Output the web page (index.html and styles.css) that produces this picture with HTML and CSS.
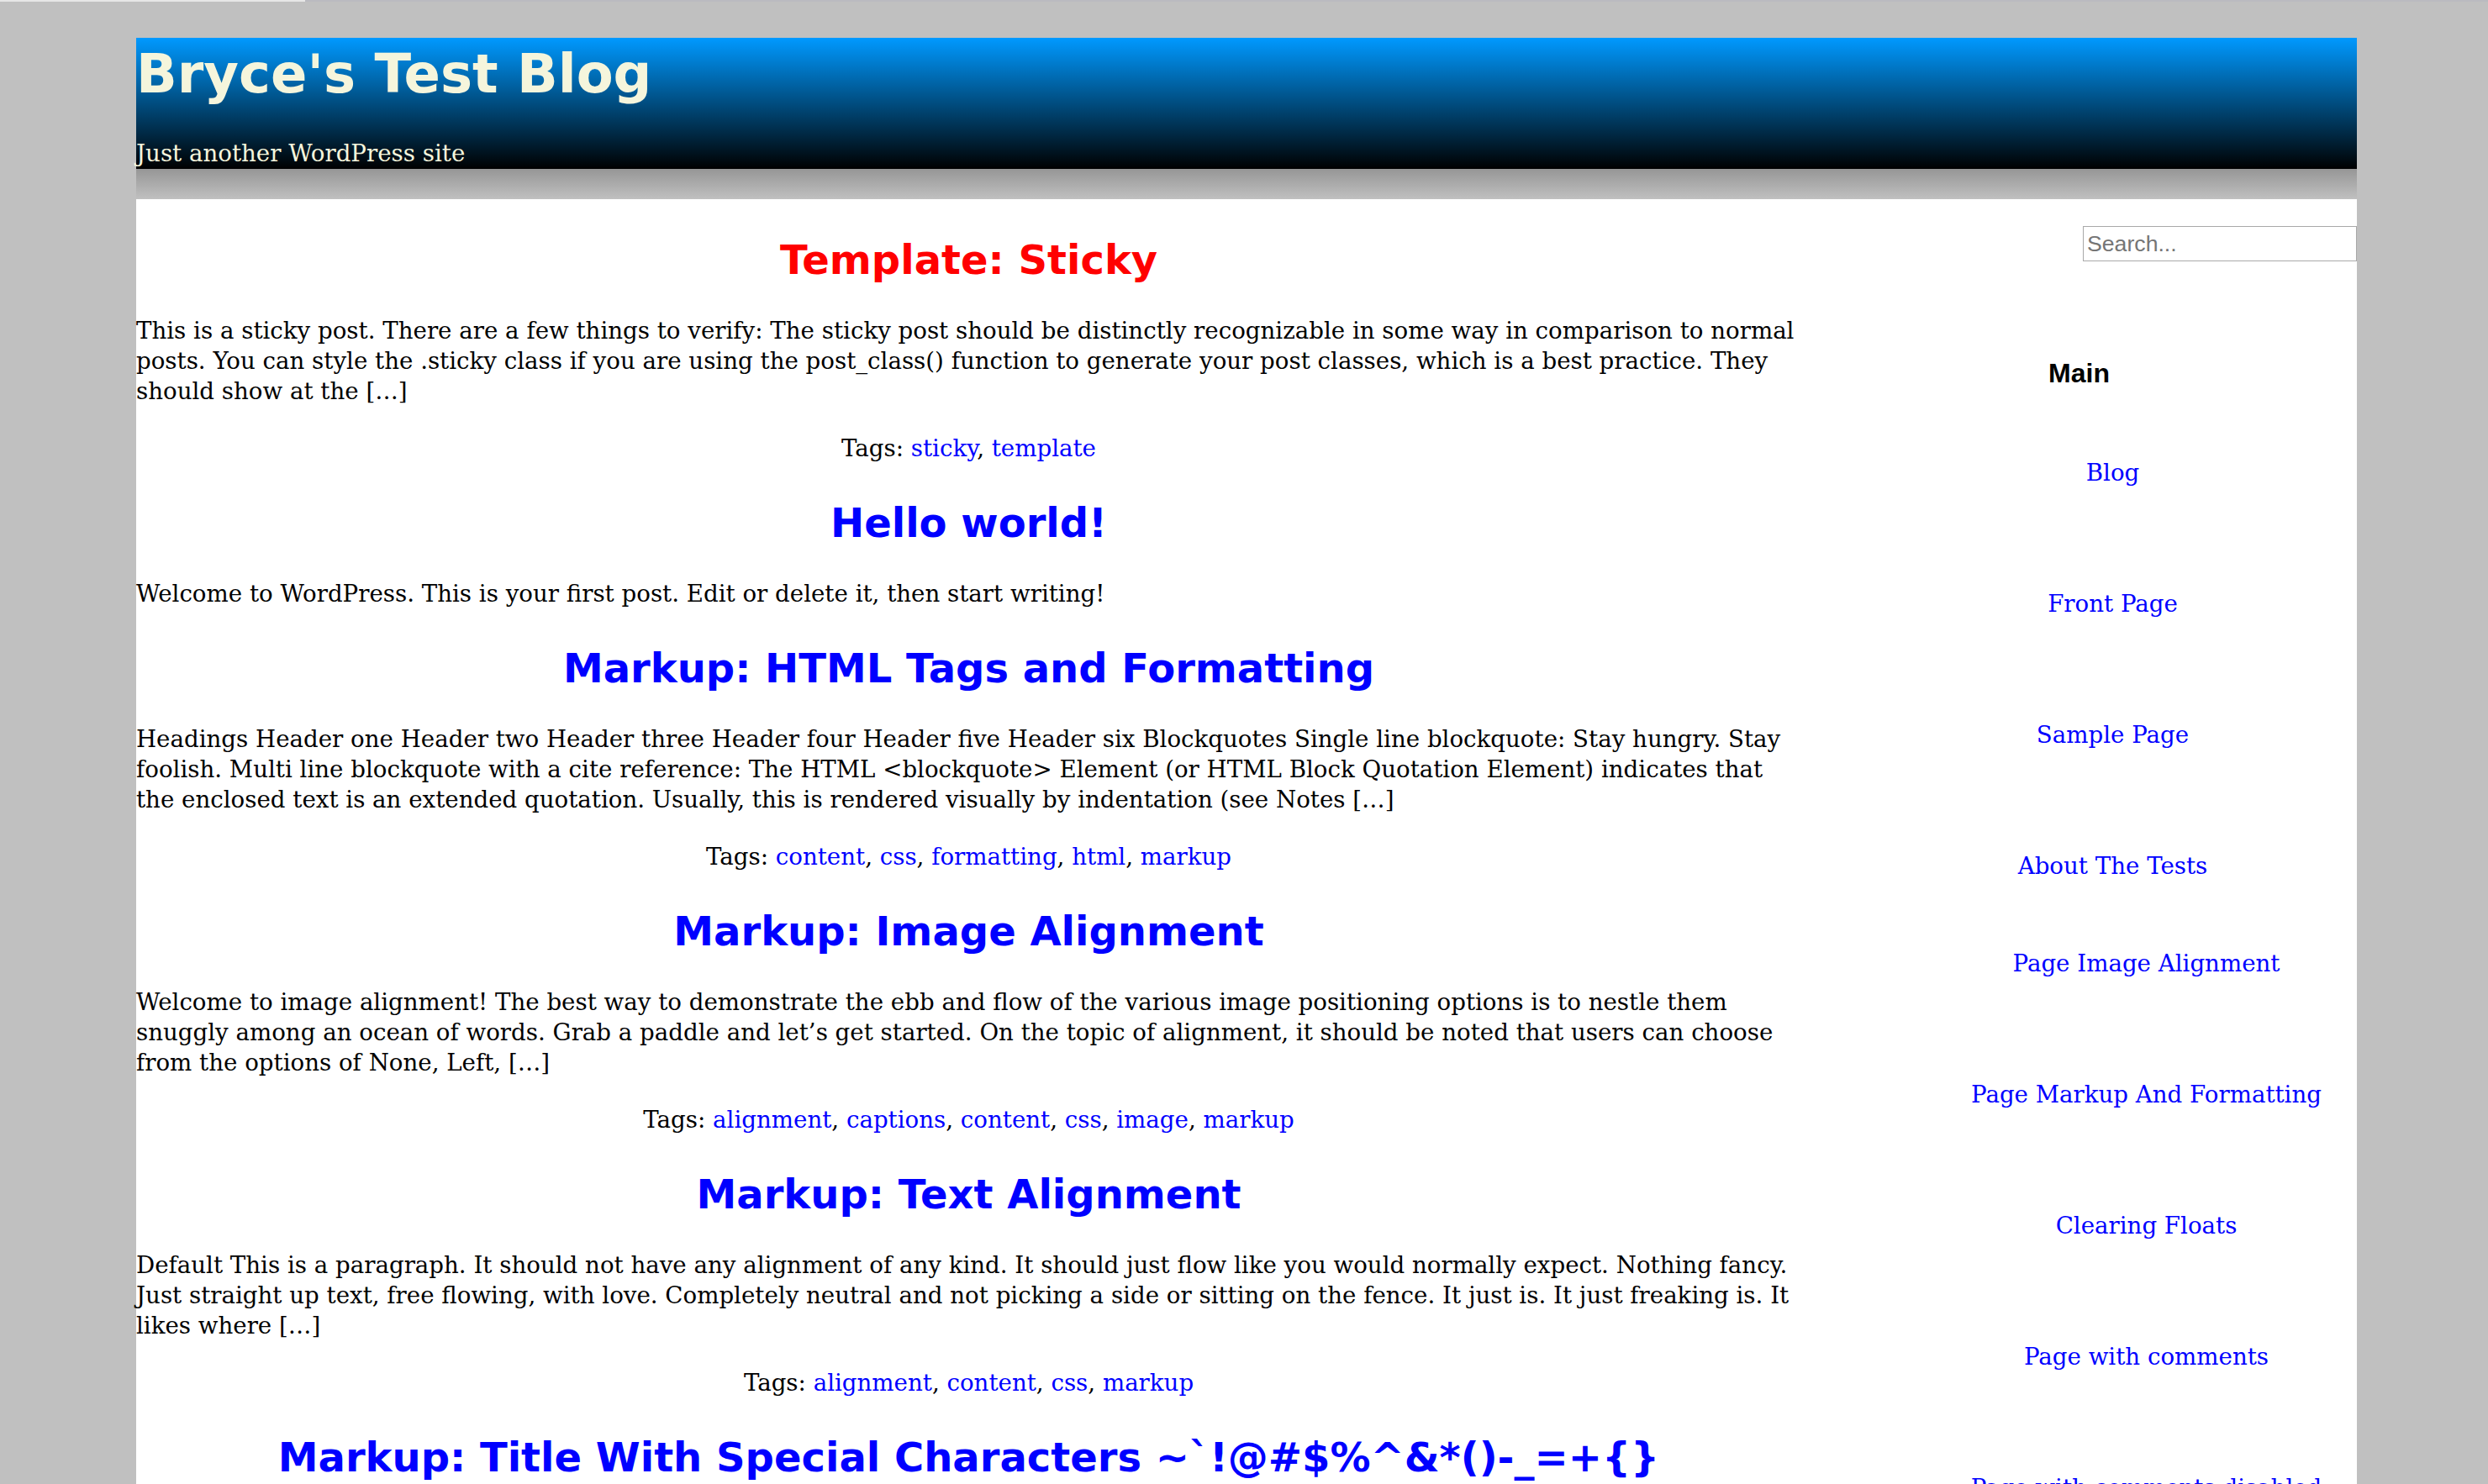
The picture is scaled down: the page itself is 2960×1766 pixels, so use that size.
FILE: index.html
```html
<!DOCTYPE html>
<html lang="en">
<head>
<meta charset="utf-8">
<title>Bryce's Test Blog</title>
<link rel="stylesheet" href="styles.css">
</head>
<body>
<div class="topbar"></div>
<div class="page">
  <header class="masthead">
    <h1 class="site-title">Bryce's Test Blog</h1>
    <p class="tagline">Just another WordPress site</p>
  </header>
  <div class="masthead-shadow"></div>
  <div class="content">
    <main class="posts">
      <article class="post sticky">
        <h2 class="post-title"><a href="#">Template: Sticky</a></h2>
        <p class="excerpt">This is a sticky post. There are a few things to verify: The sticky post should be distinctly recognizable in some way in comparison to normal posts. You can style the .sticky class if you are using the post_class() function to generate your post classes, which is a best practice. They should show at the […]</p>
        <p class="tags">Tags: <a href="#">sticky</a>, <a href="#">template</a></p>
      </article>
      <article class="post">
        <h2 class="post-title"><a href="#">Hello world!</a></h2>
        <p class="excerpt">Welcome to WordPress. This is your first post. Edit or delete it, then start writing!</p>
      </article>
      <article class="post">
        <h2 class="post-title"><a href="#">Markup: HTML Tags and Formatting</a></h2>
        <p class="excerpt">Headings Header one Header two Header three Header four Header five Header six Blockquotes Single line blockquote: Stay hungry. Stay foolish. Multi line blockquote with a cite reference: The HTML &lt;blockquote&gt; Element (or HTML Block Quotation Element) indicates that the enclosed text is an extended quotation. Usually, this is rendered visually by indentation (see Notes […]</p>
        <p class="tags">Tags: <a href="#">content</a>, <a href="#">css</a>, <a href="#">formatting</a>, <a href="#">html</a>, <a href="#">markup</a></p>
      </article>
      <article class="post">
        <h2 class="post-title"><a href="#">Markup: Image Alignment</a></h2>
        <p class="excerpt">Welcome to image alignment! The best way to demonstrate the ebb and flow of the various image positioning options is to nestle them snuggly among an ocean of words. Grab a paddle and let’s get started. On the topic of alignment, it should be noted that users can choose from the options of None, Left, […]</p>
        <p class="tags">Tags: <a href="#">alignment</a>, <a href="#">captions</a>, <a href="#">content</a>, <a href="#">css</a>, <a href="#">image</a>, <a href="#">markup</a></p>
      </article>
      <article class="post">
        <h2 class="post-title"><a href="#">Markup: Text Alignment</a></h2>
        <p class="excerpt">Default This is a paragraph. It should not have any alignment of any kind. It should just flow like you would normally expect. Nothing fancy. Just straight up text, free flowing, with love. Completely neutral and not picking a side or sitting on the fence. It just is. It just freaking is. It likes where […]</p>
        <p class="tags">Tags: <a href="#">alignment</a>, <a href="#">content</a>, <a href="#">css</a>, <a href="#">markup</a></p>
      </article>
      <article class="post">
        <h2 class="post-title"><a href="#">Markup: Title With Special Characters ~`!@#$%^&amp;*()-_=+{}<br>[]/\;:'"?,.&gt;</a></h2>
        <p class="excerpt">Putting special characters in the title should have no adverse effect on the layout or functionality. Special characters in the post title have been known to cause issues with JavaScript when it is minified, especially in the admin when editing the post itself […]</p>
      </article>
    </main>
    <aside class="sidebar">
      <form class="search" action="#">
        <input class="search-field" type="search" placeholder="Search...">
      </form>
      <h2 class="widget-title">Main</h2>
      <ul class="menu">
        <li><a href="#">Blog</a></li>
        <li><a href="#">Front Page</a></li>
        <li><a href="#">Sample Page</a></li>
        <li><a href="#">About The Tests</a>
          <ul class="menu sub-menu">
            <li><a href="#">Page Image Alignment</a></li>
            <li><a href="#">Page Markup And Formatting</a></li>
            <li><a href="#">Clearing Floats</a></li>
            <li><a href="#">Page with comments</a></li>
            <li><a href="#">Page with comments disabled</a></li>
          </ul>
        </li>
      </ul>
    </aside>
  </div>
</div>
</body>
</html>
```
FILE: styles.css
```css
html, body {
  margin: 0;
  padding: 0;
}

body {
  background: #c0c0c0;
  color: #000;
  font-family: "DejaVu Serif", "Liberation Serif", serif;
  font-size: 27.66px;
  line-height: 36px;
}

a {
  color: #0000ff;
  text-decoration: none;
}

.topbar {
  height: 2px;
  background: linear-gradient(to right, #e6e6e6 0, #e6e6e6 363px, #babac0 363px);
}

.page {
  width: 2642px;
  margin: 43px 0 0 162px;
}

.masthead {
  background: linear-gradient(to bottom, #0099ff, #000000);
  color: #f5f5dc;
  padding: 6px 0 0;
}

.site-title {
  margin: 0 0 38px;
  font-family: "DejaVu Sans", Verdana, sans-serif;
  font-weight: bold;
  font-size: 64px;
  line-height: 74px;
}

.tagline {
  margin: 0;
  padding-top: 2px;
}

.masthead-shadow {
  height: 36px;
  background: linear-gradient(to bottom, #969696, #c0c0c0);
}

.content {
  display: flex;
  align-items: flex-start;
  background: #fff;
  min-height: 1600px;
}

.posts {
  flex: 0 0 1981px;
}

.post {
  padding-top: 42px;
}

.post:first-child {
  padding-top: 44px;
}

.post-title {
  margin: 0 0 39px;
  text-align: center;
  font-family: "DejaVu Sans", Verdana, sans-serif;
  font-weight: bold;
  font-size: 48px;
  line-height: 56px;
}

.sticky .post-title a {
  color: #ff0000;
}

.excerpt {
  margin: 0;
}

.tags {
  margin: 32px 0 0;
  text-align: center;
}

.sidebar {
  flex: 1 1 auto;
  text-align: center;
  padding-top: 32px;
}

.search {
  display: flex;
  justify-content: flex-end;
  margin: 0;
}

.search-field {
  width: 326px;
  height: 42px;
  box-sizing: border-box;
  margin: 0;
  padding: 0 4px;
  border: 1px solid #a9a9a9;
  border-radius: 0;
  font-family: "Liberation Sans", Arial, sans-serif;
  font-size: 26.67px;
  color: #000;
  background: #fff;
  -webkit-appearance: none;
  appearance: none;
}

.search-field::placeholder {
  color: #757575;
}

.widget-title {
  margin: 115px 0 0;
  padding-bottom: 2px;
  font-family: "Liberation Sans", Arial, sans-serif;
  font-weight: bold;
  font-size: 32px;
  line-height: 37px;
}

.menu {
  list-style: none;
  margin: 0;
  padding: 0 0 0 80px;
}

.menu li {
  margin-top: 120px;
}

.menu li:first-child {
  margin-top: 80px;
}
```
